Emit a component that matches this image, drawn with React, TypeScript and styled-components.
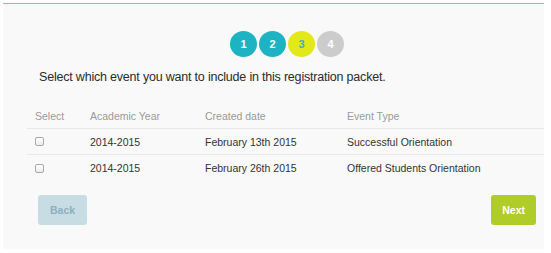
import React from 'react';
import styled, { createGlobalStyle } from 'styled-components';

const GlobalStyle = createGlobalStyle`
  html, body {
    margin: 0;
    padding: 0;
    background: #ffffff;
    font-family: 'Liberation Sans', Arial, sans-serif;
  }
`;

const StyledPanel = styled.div`
  box-sizing: border-box;
  margin: 3px 0 0 3px;
  width: 541px;
  height: 246px;
  background: #f9f9f9;
  border-top: 1px solid #74c9c9;
  padding-top: 27px;
  display: flex;
  flex-direction: column;
`;

const StyledSteps = styled.div`
  display: flex;
  justify-content: center;
  gap: 2px;
  padding-left: 27px;
`;

type StepState = 'done' | 'current' | 'todo';

const stepColors: Record<StepState, { bg: string; fg: string }> = {
  done: { bg: '#1db3c3', fg: '#ffffff' },
  current: { bg: '#e3e81a', fg: '#2fb4c4' },
  todo: { bg: '#cccccc', fg: '#ffffff' },
};

const StyledStep = styled.div<{ $state: StepState }>`
  width: 27px;
  height: 26px;
  border-radius: 50%;
  background: ${(props) => stepColors[props.$state].bg};
  color: ${(props) => stepColors[props.$state].fg};
  display: flex;
  align-items: center;
  justify-content: center;
  font-size: 11px;
  font-weight: bold;
`;

const StyledTitle = styled.h2`
  margin: 12px 0 0 36px;
  font-size: 12.5px;
  letter-spacing: -0.2px;
  font-weight: normal;
  line-height: 17px;
  color: #2b2b2b;
`;

const StyledTable = styled.div`
  margin: 17px 0 0 24px;
  display: grid;
  grid-template-columns: 63px 115px 142px 1fr;
`;

const StyledCell = styled.div<{ $head?: boolean; $last?: boolean }>`
  box-sizing: border-box;
  height: 26px;
  display: flex;
  align-items: center;
  font-size: 10.5px;
  color: ${(props) => (props.$head ? '#9a9a9a' : '#333333')};
  border-bottom: ${(props) => (props.$last ? 'none' : '1px solid #e8e8e8')};
  &:nth-child(4n + 1) {
    padding-left: 8px;
  }
`;

const StyledCheck = styled.span`
  box-sizing: border-box;
  width: 9px;
  height: 9px;
  border: 1px solid #a9a9a9;
  border-radius: 2px;
  background: linear-gradient(#ffffff, #ececec);
`;

const StyledFooter = styled.div`
  display: flex;
  justify-content: space-between;
  margin: 14px 0 0;
  padding: 0 8px 0 35px;
`;

const StyledButton = styled.button<{ $primary?: boolean }>`
  height: 30px;
  padding: 0 ${(props) => (props.$primary ? '11px' : '12px')};
  border: none;
  border-radius: 3px;
  font-family: 'Liberation Sans', Arial, sans-serif;
  font-size: 10.5px;
  font-weight: bold;
  background: ${(props) => (props.$primary ? '#afcc28' : '#c7dde3')};
  color: ${(props) => (props.$primary ? '#ffffff' : '#8db0ba')};
`;

const rows = [
  { year: '2014-2015', date: 'February 13th 2015', type: 'Successful Orientation' },
  { year: '2014-2015', date: 'February 26th 2015', type: 'Offered Students Orientation' },
];

const steps: StepState[] = ['done', 'done', 'current', 'todo'];

export default function App() {
  return (
    <>
      <GlobalStyle />
      <StyledPanel>
        <StyledSteps>
          {steps.map((s, i) => (
            <StyledStep key={i} $state={s}>
              {i + 1}
            </StyledStep>
          ))}
        </StyledSteps>
        <StyledTitle>Select which event you want to include in this registration packet.</StyledTitle>
        <StyledTable>
          <StyledCell $head>Select</StyledCell>
          <StyledCell $head>Academic Year</StyledCell>
          <StyledCell $head>Created date</StyledCell>
          <StyledCell $head>Event Type</StyledCell>
          {rows.map((r, i) => {
            const last = i === rows.length - 1;
            return (
              <React.Fragment key={i}>
                <StyledCell $last={last}>
                  <StyledCheck />
                </StyledCell>
                <StyledCell $last={last}>{r.year}</StyledCell>
                <StyledCell $last={last}>{r.date}</StyledCell>
                <StyledCell $last={last}>{r.type}</StyledCell>
              </React.Fragment>
            );
          })}
        </StyledTable>
        <StyledFooter>
          <StyledButton>Back</StyledButton>
          <StyledButton $primary>Next</StyledButton>
        </StyledFooter>
      </StyledPanel>
    </>
  );
}
